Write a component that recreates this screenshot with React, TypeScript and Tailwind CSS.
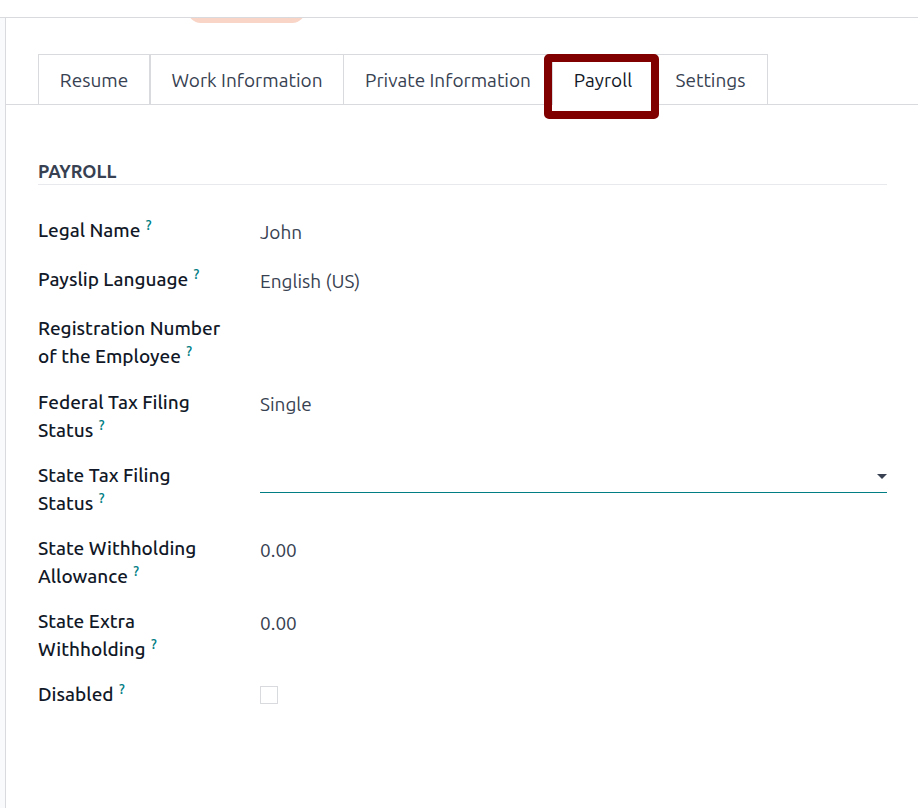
import { useState, type ReactNode } from "react";

const tabs = [
  { name: "Resume", width: "w-28 border-l" },
  { name: "Work Information", width: "w-[194px] border-l" },
  { name: "Private Information", width: "w-[209px]" },
  { name: "Payroll", width: "w-[101px]" },
  { name: "Settings", width: "w-[114px]" },
];

const control =
  "h-8 w-full appearance-none rounded-none bg-transparent p-0 text-[#374151] outline-none";

function Field({ id, label, children }: { id: string; label: string; children: ReactNode }) {
  return (
    <div className="flex min-h-8 items-start">
      <div className="w-[222px] shrink-0 pr-8">
        <label htmlFor={id} className="font-medium text-[#111827]">
          {label} <sup className="ml-px text-sm leading-none font-medium text-[#017e84]">?</sup>
        </label>
      </div>
      <div className="flex min-w-0 flex-1">{children}</div>
    </div>
  );
}

export default function App() {
  const [active, setActive] = useState("Payroll");

  return (
    <div className="flex min-h-screen flex-col bg-white font-['Ubuntu','Noto_Sans',sans-serif] text-[19px] leading-7 text-[#374151]">
      <header className="h-[18px] shrink-0 border-b border-[#d8dadd]" />
      <div className="flex flex-1 bg-[#f9fafb] pl-[5px]">
        <main className="min-w-0 flex-1 border-l border-[#d8dadd] bg-white">
          <div className="h-9 overflow-hidden pl-[182px]">
            <div className="-mt-5 h-[25px] w-[117px] rounded-full bg-[#f9d5c8]" />
          </div>

          <div role="tablist" className="flex border-b border-[#d8dadd] pl-8">
            {tabs.map((tab) => (
              <button
                key={tab.name}
                type="button"
                role="tab"
                aria-selected={active === tab.name}
                onClick={() => setActive(tab.name)}
                className={`relative shrink-0 border-t border-r border-[#d8dadd] whitespace-nowrap ${tab.width} ${
                  active === tab.name ? "-mb-px h-[51px] bg-white text-[#111827]" : "h-[50px]"
                }`}
              >
                {tab.name}
                {active === tab.name && (
                  <span className="absolute -top-px -right-1.5 -left-[9px] z-10 h-[65px] rounded-[5px] border-8 border-[#800000]" />
                )}
              </button>
            ))}
          </div>

          <section className="pr-[31px] pl-8">
            <h2 className="mt-[53px] border-b border-[#e7e9ed] text-lg leading-[26px] font-bold uppercase">
              Payroll
            </h2>
            <form className="mt-[31px] flex flex-col gap-[17px]">
              <Field id="legal-name" label="Legal Name">
                <input id="legal-name" type="text" defaultValue="John" className={control} />
              </Field>
              <Field id="language" label="Payslip Language">
                <select id="language" className={control}>
                  <option>English (US)</option>
                </select>
              </Field>
              <Field id="registration" label="Registration Number of the Employee">
                <input id="registration" type="text" className={control} />
              </Field>
              <div className="mt-px flex flex-col gap-[17px]">
                <Field id="federal-status" label="Federal Tax Filing Status">
                  <select id="federal-status" className={control}>
                    <option>Single</option>
                  </select>
                </Field>
                <Field id="state-status" label="State Tax Filing Status">
                  <div className="relative h-8 w-full border-b border-[#017e84]">
                    <select id="state-status" className={control}>
                      <option></option>
                    </select>
                    <svg
                      viewBox="0 0 10 5"
                      className="pointer-events-none absolute top-[13px] right-0 h-[5px] w-2.5 fill-[#374151]"
                      aria-hidden="true"
                    >
                      <path d="M0 0h10L5 5z" />
                    </svg>
                  </div>
                </Field>
                <Field id="allowance" label="State Withholding Allowance">
                  <input id="allowance" type="text" defaultValue="0.00" className={control} />
                </Field>
                <Field id="extra" label="State Extra Withholding">
                  <input id="extra" type="text" defaultValue="0.00" className={control} />
                </Field>
                <Field id="disabled" label="Disabled">
                  <input
                    id="disabled"
                    type="checkbox"
                    className="mt-1.5 size-[18px] appearance-none border border-[#d8dadd] bg-white checked:bg-[#017e84]"
                  />
                </Field>
              </div>
            </form>
          </section>
        </main>
      </div>
    </div>
  );
}
